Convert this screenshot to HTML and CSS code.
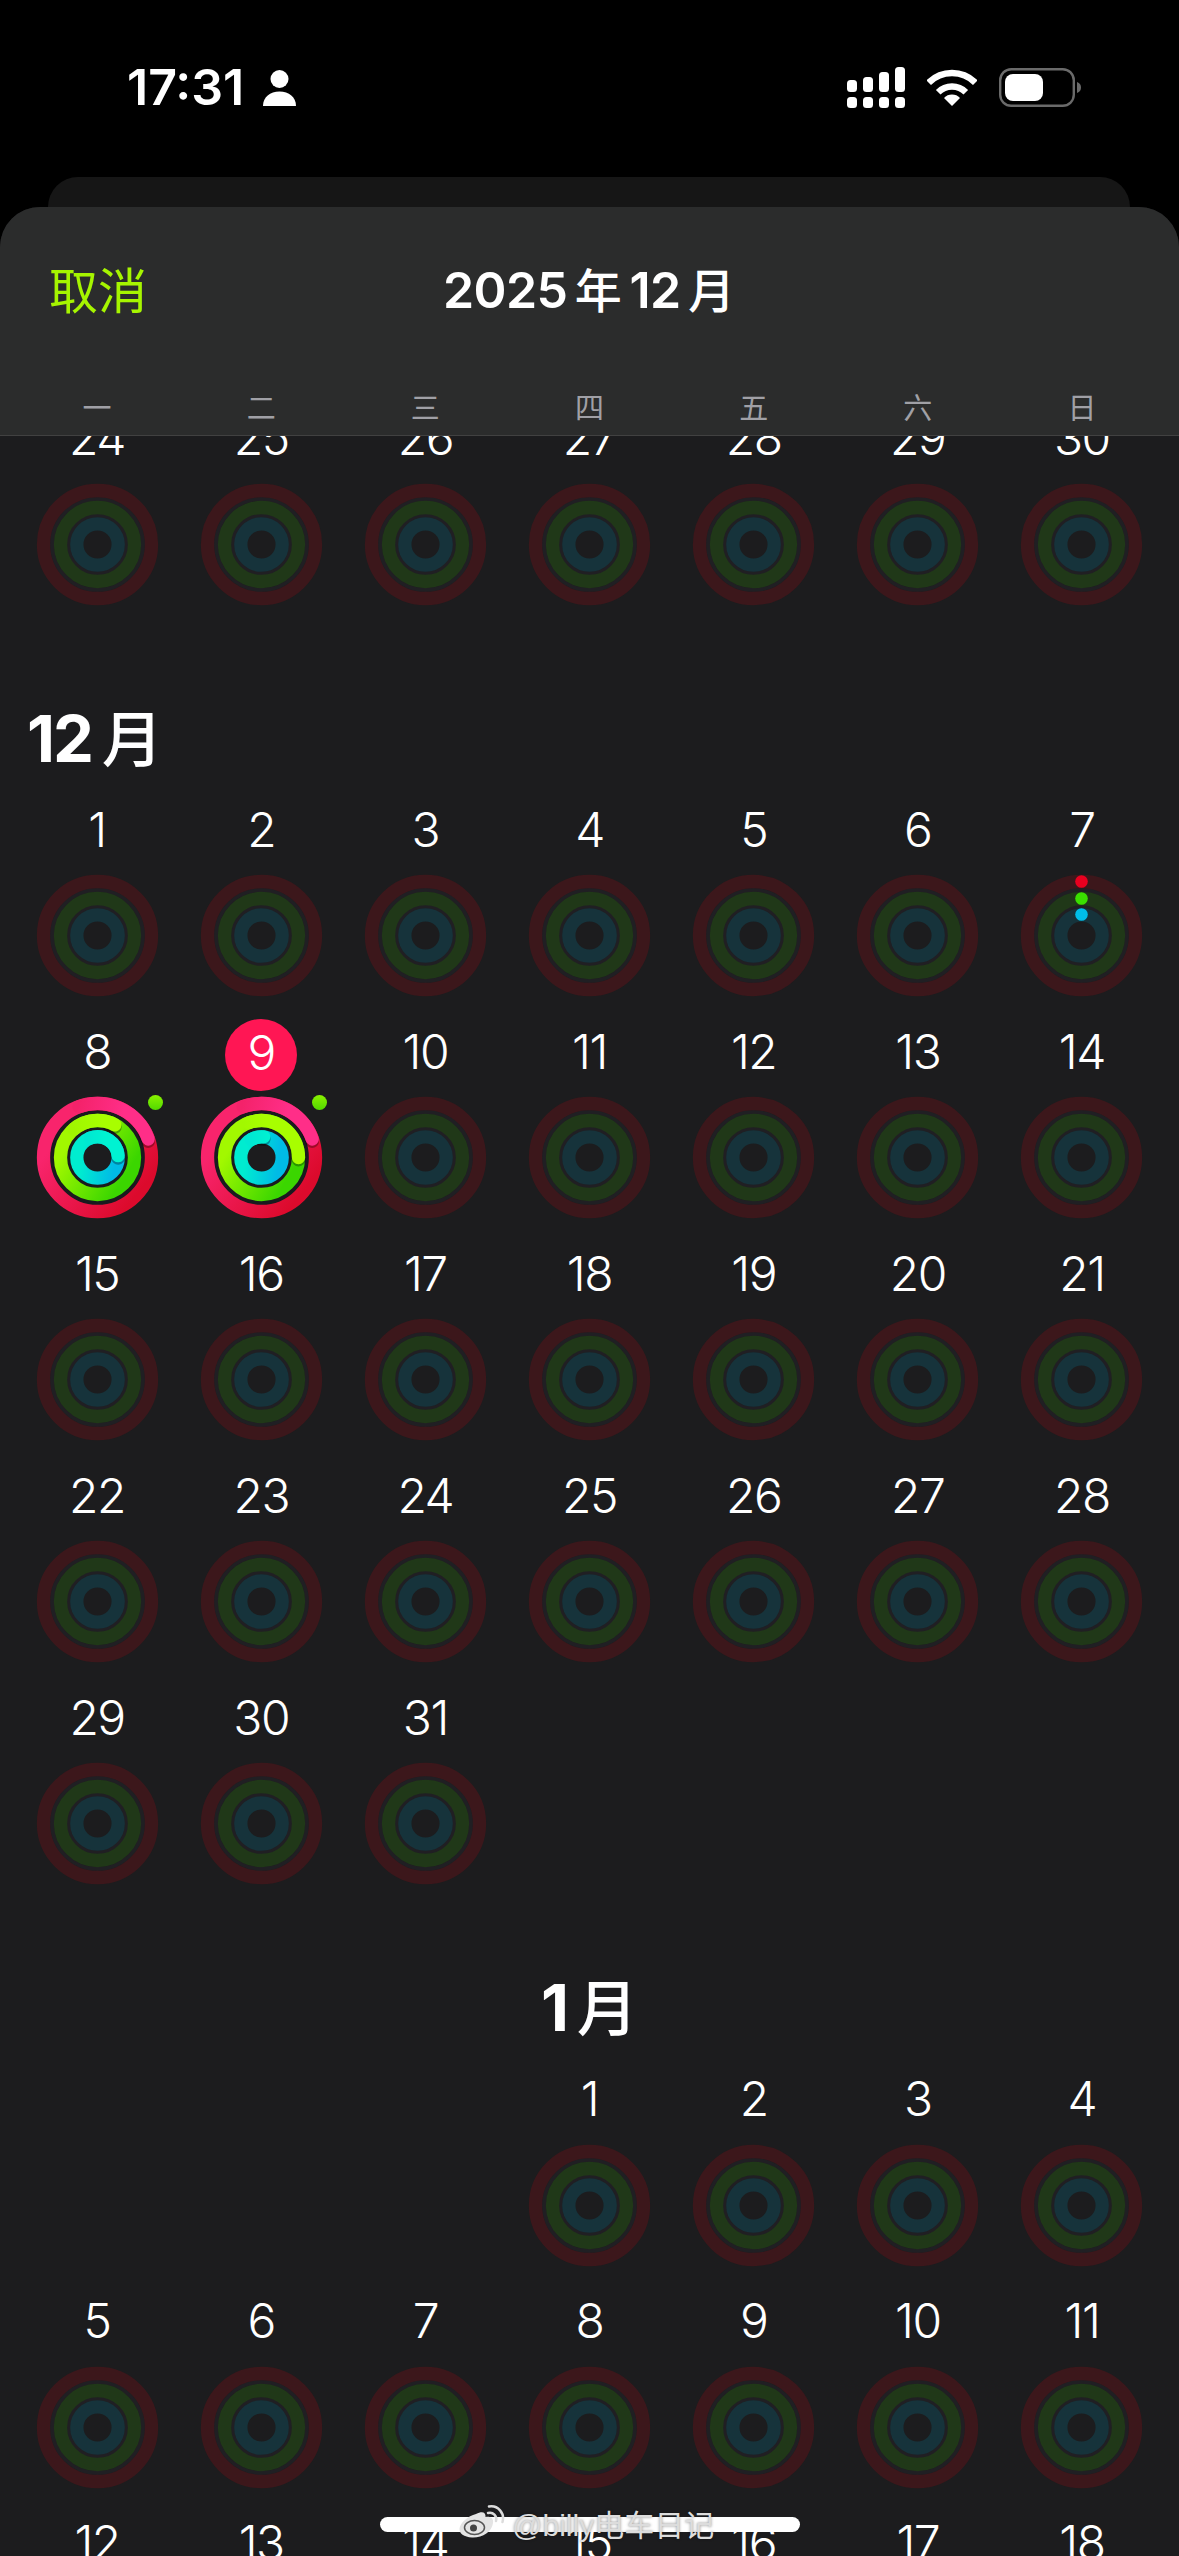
FILE: index.html
```html
<!DOCTYPE html>
<html lang="zh-CN">
<head>
<meta charset="utf-8">
<title>日历</title>
<link rel="stylesheet" href="styles.css">
</head>
<body>
<svg class="defs" aria-hidden="true">
  <defs>
    <linearGradient id="gRed" gradientUnits="userSpaceOnUse" x1="45" y1="30" x2="-30" y2="-30"><stop offset="0" stop-color="#dc0a2c"/><stop offset="1" stop-color="#f8246c"/></linearGradient>
    <linearGradient id="gGreen" gradientUnits="userSpaceOnUse" x1="30" y1="15" x2="-25" y2="-20"><stop offset="0" stop-color="#3bd600"/><stop offset="1" stop-color="#a2f800"/></linearGradient>
    <linearGradient id="gBlue" gradientUnits="userSpaceOnUse" x1="18" y1="0" x2="-15" y2="-5"><stop offset="0" stop-color="#00bbe6"/><stop offset="1" stop-color="#00ecd0"/></linearGradient>
    <linearGradient id="hRed" gradientUnits="userSpaceOnUse" x1="-20" y1="-50" x2="25" y2="-40"><stop offset="0" stop-color="#f4226a"/><stop offset="1" stop-color="#ff2e88"/></linearGradient>
    <linearGradient id="hGreen" gradientUnits="userSpaceOnUse" x1="-24" y1="-28" x2="5" y2="-36"><stop offset="0" stop-color="#a0f600"/><stop offset="1" stop-color="#a8fe00"/></linearGradient>
    <linearGradient id="hBlue" gradientUnits="userSpaceOnUse" x1="-10" y1="-18" x2="8" y2="-18"><stop offset="0" stop-color="#00e8d2"/><stop offset="1" stop-color="#00f2d2"/></linearGradient>
    <linearGradient id="gDot" x1="0" y1="0" x2="0" y2="1"><stop offset="0" stop-color="#8af200"/><stop offset="1" stop-color="#52d900"/></linearGradient>
    <g id="dim">
      <circle r="45.5" class="gap"/><circle r="29" class="gap"/>
      <circle r="54" class="track dim-red"/><circle r="37" class="track dim-green"/><circle r="20.7" class="track dim-blue"/>
    </g>
    <g id="base">
      <circle r="45.5" class="gap-on"/><circle r="29" class="gap-on"/>
      <circle r="54" class="track on-red"/><circle r="37" class="track on-green"/><circle r="20.7" class="track on-blue"/>
      <circle cx="58" cy="-55" r="7.5" class="goal"/>
    </g>
    <g id="day8">
      <use href="#base"/>
      <path d="M46.8 -27A54 54 0 0 1 50.7 -18.5" class="shade"/>
      <path d="M-18.5 -50.7A54 54 0 0 1 50.7 -18.5" class="head head-red"/>
      <path d="M11 -35.3A37 37 0 0 1 17.4 -32.7" class="shade"/>
      <path d="M-23.8 -28.3A37 37 0 0 1 17.4 -32.7" class="head head-green"/>
      <path d="M19.5 -7A20.7 20.7 0 0 1 20.6 -1.8" class="shade"/>
      <path d="M-7.1 -19.5A20.7 20.7 0 0 1 20.6 -1.8" class="head head-blue"/>
    </g>
    <g id="day9">
      <use href="#base"/>
      <path d="M46.8 -27A54 54 0 0 1 50.7 -18.5" class="shade"/>
      <path d="M-18.5 -50.7A54 54 0 0 1 50.7 -18.5" class="head head-red"/>
      <path d="M36 -8A37 37 0 0 1 37 0" class="shade"/>
      <path d="M-12.7 -34.8A37 37 0 0 1 37 0" class="head head-green"/>
      <path d="M0 -20.7A20.7 20.7 0 0 1 2.2 -20.6" class="shade"/>
      <path d="M-10.35 -17.9A20.7 20.7 0 0 1 2.2 -20.6" class="head head-blue"/>
    </g>
    <g id="start">
      <use href="#dim"/>
      <circle cy="-54" r="6.3" class="start-red"/><circle cy="-37" r="6.3" class="start-green"/><circle cy="-21" r="6.3" class="start-blue"/>
    </g>
  </defs>
</svg>
<div class="phone">
  <header class="status">
    <div class="status-left">
      <span class="time">17:31</span>
      <svg class="person" viewBox="0 0 33 36"><circle cx="16.5" cy="9" r="9"/><path d="M0 36C0 27 7 21.5 16.5 21.5S33 27 33 36Z"/></svg>
    </div>
    <div class="status-right">
      <svg class="signal" viewBox="0 0 58 41"><rect x="0" y="13" width="10" height="12" rx="3.5"/><rect x="16" y="10" width="10" height="15" rx="3.5"/><rect x="32" y="5" width="10" height="20" rx="3.5"/><rect x="48" y="0" width="10" height="25" rx="3.5"/><rect x="0" y="30" width="10" height="11" rx="3.5"/><rect x="16" y="30" width="10" height="11" rx="3.5"/><rect x="32" y="30" width="10" height="11" rx="3.5"/><rect x="48" y="30" width="10" height="11" rx="3.5"/></svg>
      <svg class="wifi" viewBox="0 0 50 37"><path d="M1.7 13.7A33 33 0 0 1 48.3 13.7" class="wifi-arc"/><path d="M11.2 23.2A19.5 19.5 0 0 1 38.8 23.2" class="wifi-arc"/><path d="M25 37L17 29A11 11 0 0 1 33 29Z"/></svg>
      <svg class="battery" viewBox="0 0 82 39"><rect x="1.2" y="1.2" width="73.6" height="36.6" rx="11" class="batt-shell"/><rect x="6" y="6" width="38" height="27" rx="8"/><path d="M78 14C81 15 82 17 82 19.5S81 24 78 25Z" class="batt-nub"/></svg>
    </div>
  </header>
  <div class="sheet-back"></div>
  <main class="sheet">
    <div class="sheet-head">
      <div class="toolbar">
        <span class="cancel">取消</span>
        <span class="title">2025<span class="cjk">年</span>12<span class="cjk">月</span></span>
        <span></span>
      </div>
      <div class="weekdays">
        <span>一</span><span>二</span><span>三</span><span>四</span><span>五</span><span>六</span><span>日</span>
      </div>
    </div>
    <div class="scroller">
      <section class="grid first">
        <div class="day"><span class="num">24</span><svg class="ring" viewBox="-60.5 -60.5 121 121"><use href="#dim"/></svg></div>
        <div class="day"><span class="num">25</span><svg class="ring" viewBox="-60.5 -60.5 121 121"><use href="#dim"/></svg></div>
        <div class="day"><span class="num">26</span><svg class="ring" viewBox="-60.5 -60.5 121 121"><use href="#dim"/></svg></div>
        <div class="day"><span class="num">27</span><svg class="ring" viewBox="-60.5 -60.5 121 121"><use href="#dim"/></svg></div>
        <div class="day"><span class="num">28</span><svg class="ring" viewBox="-60.5 -60.5 121 121"><use href="#dim"/></svg></div>
        <div class="day"><span class="num">29</span><svg class="ring" viewBox="-60.5 -60.5 121 121"><use href="#dim"/></svg></div>
        <div class="day"><span class="num">30</span><svg class="ring" viewBox="-60.5 -60.5 121 121"><use href="#dim"/></svg></div>
      </section>
      <h2 class="month month-dec">12<span class="cjk">月</span></h2>
      <section class="grid">
        <div class="day"><span class="num">1</span><svg class="ring" viewBox="-60.5 -60.5 121 121"><use href="#dim"/></svg></div>
        <div class="day"><span class="num">2</span><svg class="ring" viewBox="-60.5 -60.5 121 121"><use href="#dim"/></svg></div>
        <div class="day"><span class="num">3</span><svg class="ring" viewBox="-60.5 -60.5 121 121"><use href="#dim"/></svg></div>
        <div class="day"><span class="num">4</span><svg class="ring" viewBox="-60.5 -60.5 121 121"><use href="#dim"/></svg></div>
        <div class="day"><span class="num">5</span><svg class="ring" viewBox="-60.5 -60.5 121 121"><use href="#dim"/></svg></div>
        <div class="day"><span class="num">6</span><svg class="ring" viewBox="-60.5 -60.5 121 121"><use href="#dim"/></svg></div>
        <div class="day"><span class="num">7</span><svg class="ring" viewBox="-60.5 -60.5 121 121"><use href="#start"/></svg></div>
        <div class="day"><span class="num">8</span><svg class="ring" viewBox="-60.5 -60.5 121 121"><use href="#day8"/></svg></div>
        <div class="day"><span class="num today">9</span><svg class="ring" viewBox="-60.5 -60.5 121 121"><use href="#day9"/></svg></div>
        <div class="day"><span class="num">10</span><svg class="ring" viewBox="-60.5 -60.5 121 121"><use href="#dim"/></svg></div>
        <div class="day"><span class="num">11</span><svg class="ring" viewBox="-60.5 -60.5 121 121"><use href="#dim"/></svg></div>
        <div class="day"><span class="num">12</span><svg class="ring" viewBox="-60.5 -60.5 121 121"><use href="#dim"/></svg></div>
        <div class="day"><span class="num">13</span><svg class="ring" viewBox="-60.5 -60.5 121 121"><use href="#dim"/></svg></div>
        <div class="day"><span class="num">14</span><svg class="ring" viewBox="-60.5 -60.5 121 121"><use href="#dim"/></svg></div>
        <div class="day"><span class="num">15</span><svg class="ring" viewBox="-60.5 -60.5 121 121"><use href="#dim"/></svg></div>
        <div class="day"><span class="num">16</span><svg class="ring" viewBox="-60.5 -60.5 121 121"><use href="#dim"/></svg></div>
        <div class="day"><span class="num">17</span><svg class="ring" viewBox="-60.5 -60.5 121 121"><use href="#dim"/></svg></div>
        <div class="day"><span class="num">18</span><svg class="ring" viewBox="-60.5 -60.5 121 121"><use href="#dim"/></svg></div>
        <div class="day"><span class="num">19</span><svg class="ring" viewBox="-60.5 -60.5 121 121"><use href="#dim"/></svg></div>
        <div class="day"><span class="num">20</span><svg class="ring" viewBox="-60.5 -60.5 121 121"><use href="#dim"/></svg></div>
        <div class="day"><span class="num">21</span><svg class="ring" viewBox="-60.5 -60.5 121 121"><use href="#dim"/></svg></div>
        <div class="day"><span class="num">22</span><svg class="ring" viewBox="-60.5 -60.5 121 121"><use href="#dim"/></svg></div>
        <div class="day"><span class="num">23</span><svg class="ring" viewBox="-60.5 -60.5 121 121"><use href="#dim"/></svg></div>
        <div class="day"><span class="num">24</span><svg class="ring" viewBox="-60.5 -60.5 121 121"><use href="#dim"/></svg></div>
        <div class="day"><span class="num">25</span><svg class="ring" viewBox="-60.5 -60.5 121 121"><use href="#dim"/></svg></div>
        <div class="day"><span class="num">26</span><svg class="ring" viewBox="-60.5 -60.5 121 121"><use href="#dim"/></svg></div>
        <div class="day"><span class="num">27</span><svg class="ring" viewBox="-60.5 -60.5 121 121"><use href="#dim"/></svg></div>
        <div class="day"><span class="num">28</span><svg class="ring" viewBox="-60.5 -60.5 121 121"><use href="#dim"/></svg></div>
        <div class="day"><span class="num">29</span><svg class="ring" viewBox="-60.5 -60.5 121 121"><use href="#dim"/></svg></div>
        <div class="day"><span class="num">30</span><svg class="ring" viewBox="-60.5 -60.5 121 121"><use href="#dim"/></svg></div>
        <div class="day"><span class="num">31</span><svg class="ring" viewBox="-60.5 -60.5 121 121"><use href="#dim"/></svg></div>
      </section>
      <h2 class="month month-jan">1<span class="cjk">月</span></h2>
      <section class="grid">
        <div class="day thursday"><span class="num">1</span><svg class="ring" viewBox="-60.5 -60.5 121 121"><use href="#dim"/></svg></div>
        <div class="day"><span class="num">2</span><svg class="ring" viewBox="-60.5 -60.5 121 121"><use href="#dim"/></svg></div>
        <div class="day"><span class="num">3</span><svg class="ring" viewBox="-60.5 -60.5 121 121"><use href="#dim"/></svg></div>
        <div class="day"><span class="num">4</span><svg class="ring" viewBox="-60.5 -60.5 121 121"><use href="#dim"/></svg></div>
        <div class="day"><span class="num">5</span><svg class="ring" viewBox="-60.5 -60.5 121 121"><use href="#dim"/></svg></div>
        <div class="day"><span class="num">6</span><svg class="ring" viewBox="-60.5 -60.5 121 121"><use href="#dim"/></svg></div>
        <div class="day"><span class="num">7</span><svg class="ring" viewBox="-60.5 -60.5 121 121"><use href="#dim"/></svg></div>
        <div class="day"><span class="num">8</span><svg class="ring" viewBox="-60.5 -60.5 121 121"><use href="#dim"/></svg></div>
        <div class="day"><span class="num">9</span><svg class="ring" viewBox="-60.5 -60.5 121 121"><use href="#dim"/></svg></div>
        <div class="day"><span class="num">10</span><svg class="ring" viewBox="-60.5 -60.5 121 121"><use href="#dim"/></svg></div>
        <div class="day"><span class="num">11</span><svg class="ring" viewBox="-60.5 -60.5 121 121"><use href="#dim"/></svg></div>
        <div class="day"><span class="num">12</span></div>
        <div class="day"><span class="num">13</span></div>
        <div class="day"><span class="num">14</span></div>
        <div class="day"><span class="num">15</span></div>
        <div class="day"><span class="num">16</span></div>
        <div class="day"><span class="num">17</span></div>
        <div class="day"><span class="num">18</span></div>
      </section>
    </div>
  </main>
  <div class="home-bar"></div>
  <div class="watermark">
    <svg class="weibo" viewBox="0 0 46 36">
      <path class="weibo-body" d="M17 9C23 6 27 7 26.500 12C31 11 35 13 34 18C33 27 23 33 13 32.500C5 32 0 28.500 0.500 23.500C1 18 9 11 17 9Z"/>
      <ellipse class="weibo-eye" cx="15.500" cy="22.500" rx="10" ry="7"/>
      <circle class="weibo-pupil" cx="14.500" cy="23" r="3.500"/>
      <path class="weibo-wave" d="M29 8C34 6.500 38.500 11 37 16"/>
      <path class="weibo-wave" d="M30 1.500C39 0 46 8 43.500 17"/>
    </svg>
    <span>@billy电车日记</span>
  </div>
</div>
</body>
</html>
```
FILE: styles.css
```css
* { box-sizing: border-box; }
html, body { margin: 0; padding: 0; width: 1179px; height: 2556px; overflow: hidden; background: #000; }
body { font-family: Inter, "Noto Sans CJK SC", sans-serif; color: #fff; }
.defs { position: absolute; width: 0; height: 0; }
.phone { position: relative; width: 1179px; height: 2556px; overflow: hidden; background: #000; }

/* status bar */
.status { height: 177px; padding: 56px 98px 0 127px; display: flex; justify-content: space-between; align-items: flex-start; }
.status-left { display: flex; align-items: flex-start; gap: 19px; }
.time { font-size: 50px; font-weight: 600; line-height: 60px; margin-top: 1px; }
.person { width: 33px; height: 36px; margin-top: 14px; fill: #fff; }
.status-right { display: flex; align-items: flex-start; gap: 22px; padding-top: 11px; }
.signal { width: 58px; height: 41px; fill: #fff; }
.wifi { width: 50px; height: 37px; margin-top: 2px; fill: #fff; }
.wifi-arc { fill: none; stroke: #fff; stroke-width: 6.5; }
.battery { width: 82px; height: 39px; margin-top: 1px; fill: #fff; }
.batt-shell { fill: none; stroke: #6a6a6a; stroke-width: 2.400; }
.batt-nub { fill: #6a6a6a; }

/* sheets */
.sheet-back { height: 30px; margin: 0 49px 0 48px; background: #161616; border-radius: 30px 30px 0 0; }
.sheet { height: 2349px; background: #1c1c1e; border-radius: 40px 40px 0 0; overflow: hidden; display: flex; flex-direction: column; }
.sheet-head { height: 229px; flex: none; background: #2b2c2c; border-bottom: 1px solid #414141; display: flex; flex-direction: column; }
.toolbar { display: grid; grid-template-columns: 1fr auto 1fr; align-items: center; padding: 45px 50px 0 49px; height: 113px; }
.cancel { font-size: 49px; line-height: 68px; color: #a6f500; padding-top: 6px; }
.title { font-size: 50px; font-weight: 600; line-height: 68px; letter-spacing: -0.6px; }
.cjk { font-family: "Noto Sans CJK SC", sans-serif; font-weight: 500; font-size: .94em; margin: 0 .16em; letter-spacing: 0; }
.title .cjk:last-child, .month .cjk { margin-right: 0; }
.weekdays { display: grid; grid-template-columns: repeat(7, 1fr); padding: 0 15px; margin-top: 66px; }
.weekdays span { text-align: center; font-size: 29px; line-height: 40px; color: #a0a0a6; font-family: "Noto Sans CJK SC", sans-serif; }

/* calendar */
.scroller { flex: 1; overflow: hidden; }
.grid { display: grid; grid-template-columns: repeat(7, 1fr); row-gap: 22.5px; padding: 0 15px; }
.grid.first { margin-top: -31px; }
.day { display: flex; flex-direction: column; align-items: center; }
.thursday { grid-column-start: 4; }
.num { width: 72px; height: 72px; margin-bottom: 6.5px; text-align: center; font-size: 48px; font-weight: 300; line-height: 66px; letter-spacing: -1.5px; color: #fff; border-radius: 50%; white-space: nowrap; }
.today { background: #ff1654; line-height: 68px; }
.ring { width: 121px; height: 121px; overflow: visible; display: block; }
.month { margin: 0; font-size: 65px; font-weight: 700; line-height: 80px; letter-spacing: -2px; }
.month-dec { height: 192px; padding-top: 91px; padding-left: 27px; }
.month-jan { height: 182px; padding-top: 81px; text-align: center; }

/* rings */
.track { fill: none; stroke-width: 13.300; }
.gap { fill: none; stroke: #201f23; stroke-width: 4; }
.gap-on { fill: none; stroke: #1a1a1f; stroke-width: 4; }
.dim-red { stroke: #3c171b; }
.dim-green { stroke: #203818; }
.dim-blue { stroke: #16333b; }
.on-red { stroke: url(#gRed); }
.on-green { stroke: url(#gGreen); }
.on-blue { stroke: url(#gBlue); }
.shade { fill: none; stroke: #000; stroke-opacity: .3; stroke-width: 14; stroke-linecap: round; transform: translateY(2px); }
.head { fill: none; stroke-width: 13.300; stroke-linecap: round; }
.head-red { stroke: url(#hRed); }
.head-green { stroke: url(#hGreen); }
.head-blue { stroke: url(#hBlue); }
.goal { fill: url(#gDot); }
.start-red { fill: #e8001f; }
.start-green { fill: #3adf00; }
.start-blue { fill: #00bde8; }

/* overlays */
.home-bar { position: absolute; left: 380px; top: 2517px; width: 420px; height: 15px; border-radius: 8px; background: #fff; }
.watermark { position: absolute; left: 459px; top: 2505px; display: flex; align-items: center; gap: 7px; height: 36px; color: #dcdcdc; font-family: "Liberation Sans", "Noto Sans CJK SC", sans-serif; font-size: 30px; text-shadow: 0 0 3px rgba(0,0,0,.45); }
.weibo { width: 46px; height: 36px; flex: none; }
.weibo-body { fill: #e4e4e4; }
.weibo-eye { fill: #e4e4e4; stroke: #555; stroke-width: 1.5; }
.weibo-pupil { fill: #444; }
.weibo-wave { fill: none; stroke: #dcdcdc; stroke-width: 2.500; stroke-linecap: round; }
```
